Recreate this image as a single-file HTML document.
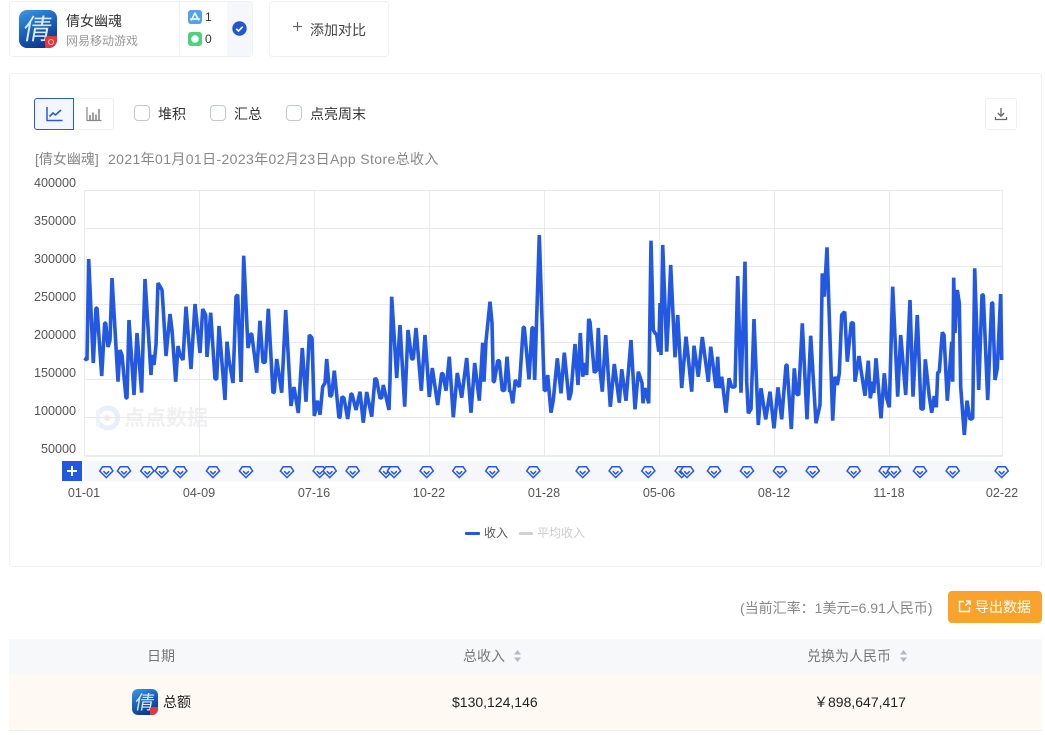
<!DOCTYPE html>
<html lang="zh-CN">
<head>
<meta charset="utf-8">
<title>倩女幽魂</title>
<style>
html,body{margin:0;padding:0;background:#fff;}
body{width:1045px;height:735px;position:relative;overflow:hidden;font-family:"Liberation Sans","Noto Sans CJK SC",sans-serif;color:#333;}
.a{position:absolute;box-sizing:border-box;}
.t{position:absolute;white-space:nowrap;line-height:1;}
.card{border:1px solid #f0f0f2;border-radius:4px;background:#fff;}
.cb{position:absolute;width:16px;height:16px;border:1px solid #c4c8d0;border-radius:4px;box-sizing:border-box;background:#fff;}
.icon{position:absolute;overflow:hidden;background:linear-gradient(155deg,#3d9be4 0%,#1c66c0 42%,#08287c 100%);}
.icon span{position:absolute;left:0;right:0;text-align:center;color:#dcebf8;font-family:"Noto Sans CJK SC",sans-serif;font-weight:400;line-height:1;}
.badge{position:absolute;background:#e4383f;}
</style>
</head>
<body>

<!-- app card -->
<div class="a card" style="left:9px;top:1px;width:244px;height:56px;"></div>
<div class="a" style="left:227px;top:2px;width:25px;height:54px;background:#f5f7fa;border-radius:0 4px 4px 0;"></div>
<div class="a" style="left:179px;top:2px;width:1px;height:54px;background:#eeeff1;"></div>
<div class="icon" style="left:19px;top:10px;width:38px;height:38px;border-radius:8px;">
  <span style="top:4px;font-size:28px;transform:skewX(-10deg);">倩</span>
  <div class="badge" style="right:0;bottom:0;width:12px;height:12px;border-radius:3px 0 6px 0;"></div>
  <div style="position:absolute;right:3px;bottom:3px;width:6px;height:6px;border:1px solid #f7c0c2;border-radius:50%;box-sizing:border-box;"></div>
</div>
<div class="t" style="left:66px;top:14px;font-size:14px;color:#333;">倩女幽魂</div>
<div class="t" style="left:66px;top:35px;font-size:12px;color:#999;">网易移动游戏</div>
<svg class="a" style="left:188px;top:10px;" width="14" height="14" viewBox="0 0 14 14">
  <rect width="14" height="14" rx="3" fill="#4da3ee"/>
  <path d="M7 3L3.5 10M7 3l3.5 7M2.600 9h8.800" stroke="#fff" stroke-width="1.500" fill="none" stroke-linecap="round"/>
</svg>
<svg class="a" style="left:188px;top:32px;" width="14" height="14" viewBox="0 0 14 14">
  <rect width="14" height="14" rx="3" fill="#4fd07a"/>
  <circle cx="7" cy="7" r="3.800" fill="#fff"/>
</svg>
<div class="t" style="left:205px;top:11px;font-size:12px;color:#333;">1</div>
<div class="t" style="left:205px;top:33px;font-size:12px;color:#333;">0</div>
<svg class="a" style="left:232px;top:21px;" width="15" height="15" viewBox="0 0 15 15">
  <circle cx="7.500" cy="7.500" r="7.200" fill="#2456d0"/>
  <path d="M4.200 7.800l2.300 2.200 4.200-4.300" stroke="#fff" stroke-width="1.600" fill="none"/>
</svg>

<!-- add compare -->
<div class="a card" style="left:269px;top:1px;width:120px;height:56px;"></div>
<svg class="a" style="left:292px;top:21px;" width="11" height="11" viewBox="0 0 11 11">
  <path d="M5.500 1v9M1 5.500h9" stroke="#666" stroke-width="1.200" fill="none"/>
</svg>
<div class="t" style="left:310px;top:23px;font-size:14px;color:#444;">添加对比</div>

<!-- chart card -->
<div class="a card" style="left:9px;top:73px;width:1033px;height:494px;"></div>

<!-- toggle -->
<div class="a" style="left:74px;top:98px;width:40px;height:32px;border:1px solid #eeeff1;border-left:0;border-radius:0 3px 3px 0;background:#fff;"></div>
<div class="a" style="left:34px;top:98px;width:40px;height:32px;border:1px solid #2a5bd7;border-radius:3px 0 0 3px;background:#f3f6fd;"></div>
<svg class="a" style="left:46px;top:106px;" width="17" height="16" viewBox="0 0 17 16">
  <path d="M1 1v13.500h15.500" stroke="#2a5bd7" stroke-width="1.500" fill="none"/>
  <path d="M3.500 10.500l3.500-3.500 2.500 2 5.500-5" stroke="#2a5bd7" stroke-width="1.600" fill="none"/>
</svg>
<svg class="a" style="left:86px;top:106px;" width="16" height="16" viewBox="0 0 16 16">
  <path d="M1 1v13.500h14.500" stroke="#888" stroke-width="1.200" fill="none"/>
  <path d="M4 14V9M7 14V6.500M10 14V8.500M13 14V3" stroke="#888" stroke-width="1.600" fill="none"/>
</svg>

<div class="cb" style="left:134px;top:105px;"></div>
<div class="t" style="left:158px;top:107px;font-size:14px;color:#333;">堆积</div>
<div class="cb" style="left:210px;top:105px;"></div>
<div class="t" style="left:234px;top:107px;font-size:14px;color:#333;">汇总</div>
<div class="cb" style="left:286px;top:105px;"></div>
<div class="t" style="left:310px;top:107px;font-size:14px;color:#333;">点亮周末</div>

<!-- download -->
<div class="a" style="left:985px;top:98px;width:32px;height:32px;border:1px solid #eeeff1;border-radius:3px;"></div>
<svg class="a" style="left:994px;top:107px;" width="14" height="14" viewBox="0 0 14 14">
  <path d="M7 1v8M3.800 6l3.200 3.200L10.200 6M1.500 10v2.500h11V10" stroke="#666" stroke-width="1.300" fill="none"/>
</svg>

<div class="t" style="left:35px;top:152px;font-size:14px;color:#888;">[倩女幽魂]</div>
<div class="t" style="left:108px;top:152px;font-size:14px;color:#888;letter-spacing:.38px;">2021年01月01日-2023年02月23日App Store总收入</div>

<!-- watermark -->
<svg class="a" style="left:94px;top:404px;" width="26" height="28" viewBox="0 0 26 28">
  <path d="M5 9A10 10 0 1 1 5 19" stroke="#e8effb" stroke-width="5" fill="none"/>
  <path d="M4 6v16" stroke="#eef3fc" stroke-width="4" fill="none"/>
  <circle cx="13" cy="14" r="3" fill="#fbe6e0"/>
</svg>
<div class="t" style="left:124px;top:408px;font-size:21px;font-weight:700;color:#f0f0f2;">点点数据</div>

<!-- chart -->
<svg class="a" style="left:0;top:170px;" width="1045" height="340" viewBox="0 170 1045 340">
  <g stroke="#e9e9ee" stroke-width="1" fill="none">
    <path d="M84 190.500H1003M84 228.500H1003M84 266.500H1003M84 304.500H1003M84 342.500H1003M84 379.500H1003M84 417.500H1003"/>
    <path d="M84.500 190V456M199.500 190V456M314.500 190V456M429.500 190V456M544.500 190V456M659.500 190V456M774.500 190V456M889.500 190V456M1002.500 190V456"/>
  </g>
  <path d="M84 456H1003" stroke="#e6e7ea" stroke-width="1.500"/>
  <rect x="84" y="461" width="919" height="20.500" fill="#f5f7fa"/>
  <polyline fill="none" stroke="#2358e0" stroke-width="3.600" stroke-linejoin="bevel" stroke-linecap="butt" points="84.3,358 87,360 88.7,259 93.3,363 96,308 97,308 101.7,376 104.7,323 105.7,323 108,347 110,340 112,278 118,381.6 120,350 122,355 126,398 127,398 129,320 134,395 137,333 141.6,392.6 145,279 151,375 152,355 154,365 156,345 158,283 161,288 162,290 163,305 166,356 170,314 172,330 175.7,381.7 178,346 180,355 183,360 186,306.7 191,369 195,304 200,353 202.7,309 205.7,315 207,357 210.7,312.7 215,379 216.7,379 219,326 225,400 227,341.7 229,360 233,383 236,296.7 237.7,294.7 241,382 243.7,255.7 248,348 250.7,334 251.7,334 256.7,372.7 260,320.7 263,362.7 265.3,362 268.3,308.7 273,393 274.3,392 276.7,359 281.7,392.7 285.7,310 291,406 294,387 298.3,413 302.3,348 306,401.7 309.3,335 312,338 314.3,416 317.3,400.7 320,414.7 322.7,386.7 325,383 326.7,359 330,396.7 331.7,395 334.3,370.7 339,418 340,417 342,396.7 344,398 347.7,419 351,394 352,394 356,410 360,391.7 363.3,422.7 366.7,392 371.7,416.7 375,378 376.7,380 380,398 381.7,398 383.3,385 389,410 390,380 391.7,296.7 396.7,378 400,325 404.7,406.7 408,330 411.7,359 413.3,359 416,328 421.3,390.7 425,335 429.3,397 432.3,368 437.7,405 441.7,373 443,374 446,390.7 449.3,356.7 453.3,417.3 457.3,373 461.7,397.7 466.7,358 471,412.7 474.7,363 479.3,400.7 482.7,342.7 484,381.7 486,341 490,301.7 492,323 493.3,381.7 494.3,381.7 497.7,360.7 499.3,360.7 502.3,390.7 504.7,390 507,356.7 509.7,391.7 510.7,391 512.7,403.3 515.3,380 519.3,387 523.3,327.3 524.3,327.3 529,379.3 532,327.7 533,327.7 534.7,380 539.3,235 544.3,390.7 546,390 547.7,375 551,412.7 553.3,400 557.3,358.3 561,393.3 564.3,352.7 569,400 571,393 572.7,371.7 575,344 578,385 580.3,333 582.7,376.7 585,363 586.7,375 588.7,319 590,322 594.3,372.7 596.7,370 598.3,328 600,370 602.3,391.7 605.7,335 610.3,406.7 614.3,364 619.3,402.7 621.7,369.3 626,400.7 631,340 635,409.3 638.3,371.7 642,383 643,403.3 645,388 648.7,403.3 651,240.7 653.3,330 655,333 656.7,335 658.7,351.7 660,303 661,355 662.7,245 666.7,351.7 668.3,320 670.7,265 675,357.3 677.7,315 681.7,388 686,336.7 688.3,358 691.7,391.7 694,345.7 698.3,376.7 702.3,337 708.3,381.7 710.7,346.7 716,388 717.7,356.7 719.3,388 721.7,376.7 726,412.7 729,378.3 731.7,387 735,387 737.7,276 741,392.7 745,261.7 746.7,381.7 748.3,413.3 751,409 754,319 758.3,425 761,388.3 765.7,419.3 770,391.7 774,428.3 778,387.3 781.7,419.3 786,365 787,365 791.3,429 794.3,368.3 796.7,394 798.7,395 802.3,323.3 807,419.3 810.7,335.7 816,423.3 820,405 822.3,273.3 824.3,296.7 827,247.3 832.7,420.7 835,376.7 837.3,385 839.3,373.3 841.7,315 844.7,311.7 847.3,361.7 851.3,322.7 853.3,323 855,381.7 859,356 861,370 865,395.7 868.3,360.7 870.3,398.3 873,381.7 873.7,393 876,358.3 881,418.3 884.3,373.3 886.7,398.3 889.3,407.3 892.7,286.7 897.7,396.7 900.7,335 905.7,395 910,300 913,396.7 917.3,315 921,409 923.3,409 925.3,359.3 929.3,396.7 931.7,412.7 934.3,396 936.3,407.3 937.7,372.7 939.3,371.7 942.3,332.3 944,335 947.3,400.7 951.7,341.7 952.7,381.7 953.7,277.7 955,333 957.3,290 959.3,303 960.7,386.7 964.3,435 967,400.7 970,419.3 972.7,418.3 974.7,268.3 978.7,390 982,294.7 983.3,295 987.7,400 991.7,302.7 992.7,303 995,380 997.3,368.3 1000.7,294 1001.7,360"/>
  <rect x="62" y="461" width="20" height="20" fill="#2358e0"/>
  <path d="M67 471h10M72 466v10" stroke="#fff" stroke-width="2"/>
  <defs>
    <g id="m" fill="none" stroke="#2358e0">
      <path d="M-3.800-5.200H3.800L6.600-1 0 5.600-6.600-1Z" fill="#f5f7fa" stroke-width="1.500"/>
      <path d="M-2.800-.8 0 2 2.800-.8" stroke-width="1.500"/>
    </g>
  </defs>
  <g>
    <use href="#m" x="106.3" y="472"/><use href="#m" x="124" y="472"/><use href="#m" x="147.3" y="472"/><use href="#m" x="161.7" y="472"/><use href="#m" x="180.3" y="472"/><use href="#m" x="213" y="472"/><use href="#m" x="246" y="472"/><use href="#m" x="287" y="472"/><use href="#m" x="319.7" y="472"/><use href="#m" x="329.7" y="472"/><use href="#m" x="352.7" y="472"/><use href="#m" x="386" y="472"/><use href="#m" x="394" y="472"/><use href="#m" x="426.7" y="472"/><use href="#m" x="459.3" y="472"/><use href="#m" x="492.3" y="472"/><use href="#m" x="533.3" y="472"/><use href="#m" x="582.7" y="472"/><use href="#m" x="615.7" y="472"/><use href="#m" x="648.3" y="472"/><use href="#m" x="681.7" y="472"/><use href="#m" x="687" y="472"/><use href="#m" x="714" y="472"/><use href="#m" x="747" y="472"/><use href="#m" x="780" y="472"/><use href="#m" x="812.7" y="472"/><use href="#m" x="853.7" y="472"/><use href="#m" x="885.7" y="472"/><use href="#m" x="894" y="472"/><use href="#m" x="920" y="472"/><use href="#m" x="952.7" y="472"/><use href="#m" x="1001.7" y="472"/>
  </g>
  <g font-family="Liberation Sans, sans-serif" font-size="12.6" fill="#555" text-anchor="end">
    <text x="76" y="187">400000</text><text x="76" y="225">350000</text><text x="76" y="263">300000</text><text x="76" y="301">250000</text><text x="76" y="339">200000</text><text x="76" y="377">150000</text><text x="76" y="415">100000</text><text x="76" y="453">50000</text>
  </g>
  <g font-family="Liberation Sans, sans-serif" font-size="12.6" fill="#555" text-anchor="middle">
    <text x="84" y="497">01-01</text><text x="199" y="497">04-09</text><text x="314" y="497">07-16</text><text x="429" y="497">10-22</text><text x="544" y="497">01-28</text><text x="659" y="497">05-06</text><text x="774" y="497">08-12</text><text x="889" y="497">11-18</text><text x="1002" y="497">02-22</text>
  </g>
</svg>

<!-- legend -->
<div class="a" style="left:465px;top:532px;width:15px;height:3px;background:#2358e0;border-radius:1px;"></div>
<div class="t" style="left:484px;top:527px;font-size:12px;color:#555;">收入</div>
<div class="a" style="left:519px;top:532px;width:14px;height:3px;background:#d0d0d0;border-radius:1px;"></div>
<div class="t" style="left:537px;top:527px;font-size:12px;color:#ccc;">平均收入</div>

<!-- exchange + export -->
<div class="t" style="left:740px;top:601px;font-size:14px;color:#888;">(当前汇率：1美元=6.91人民币)</div>
<div class="a" style="left:948px;top:591px;width:94px;height:32px;background:#f9a22c;border-radius:4px;"></div>
<svg class="a" style="left:958px;top:600px;" width="13" height="13" viewBox="0 0 13 13">
  <path d="M6 1.500H1.500v10h10V7M7.500 5.500 11.500 1.500M8 1h4v4" stroke="#fff" stroke-width="1.400" fill="none"/>
</svg>
<div class="t" style="left:975px;top:600px;font-size:14px;color:#fff;">导出数据</div>

<!-- table -->
<div class="a" style="left:9px;top:639px;width:1033px;height:35px;background:#f6f8fa;"></div>
<div class="a" style="left:9px;top:674px;width:1033px;height:57px;background:#fff9f3;border-bottom:1px solid #eeeff1;"></div>
<div class="t" style="left:147px;top:649px;font-size:14px;color:#777;">日期</div>
<div class="t" style="left:463px;top:649px;font-size:14px;color:#777;">总收入</div>
<svg class="a" style="left:513px;top:649px;" width="9" height="14" viewBox="0 0 9 14">
  <path d="M4.500 1 8 5.500H1ZM4.500 13 8 8.500H1Z" fill="#b4b7bd"/>
</svg>
<div class="t" style="left:807px;top:649px;font-size:14px;color:#777;">兑换为人民币</div>
<svg class="a" style="left:899px;top:649px;" width="9" height="14" viewBox="0 0 9 14">
  <path d="M4.500 1 8 5.500H1ZM4.500 13 8 8.500H1Z" fill="#b4b7bd"/>
</svg>
<div class="icon" style="left:132px;top:689px;width:26px;height:26px;border-radius:6px;">
  <span style="top:3px;font-size:19px;transform:skewX(-10deg);">倩</span>
  <div class="badge" style="right:0;bottom:0;width:8px;height:8px;border-radius:2px 0 4px 0;"></div>
</div>
<div class="t" style="left:163px;top:695px;font-size:14px;color:#222;">总额</div>
<div class="t" style="left:452px;top:695px;font-size:14px;color:#222;">$130,124,146</div>
<div class="t" style="left:814px;top:695px;font-size:14px;color:#222;">￥898,647,417</div>

</body>
</html>
